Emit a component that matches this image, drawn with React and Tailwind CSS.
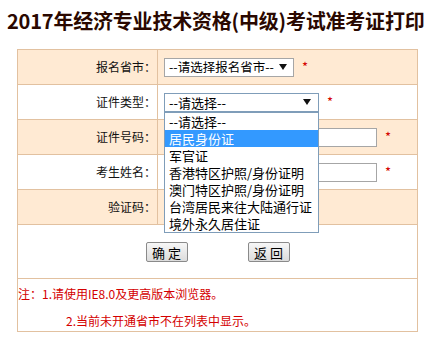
const cjk = { fontFamily: '"Noto Sans CJK SC", "Liberation Sans", sans-serif' };

const options = ['--请选择--', '居民身份证', '军官证', '香港特区护照/身份证明', '澳门特区护照/身份证明', '台湾居民来往大陆通行证', '境外永久居住证'];

const Star = () => <span className="ml-2 text-[13px] text-[#d40000]">*</span>;

const Row = ({ label, shaded, children }) => (
  <div className={`flex h-[35px] border-b border-[#e2c1a0] ${shaded ? 'bg-[#ffead3]' : 'bg-white'}`}>
    <div className="flex w-[140px] items-center justify-end border-r border-[#e2c1a0] pr-[1px] text-[12px] text-[#111]">{label}</div>
    <div className="relative flex flex-1 items-center pl-[6px]">{children}</div>
  </div>
);

const Arrow = () => (
  <svg width="8" height="6" viewBox="0 0 8 6" className="shrink-0"><path d="M0 0h8L4 6z" fill="#111" /></svg>
);

export default function App() {
  return (
    <div className="min-h-[342px] w-[431px] bg-white" style={cjk}>
      <h1 className="pl-[7px] pt-[9px] text-[20px] font-bold leading-[24px] tracking-[-0.2px] text-[#2a0800]">2017年经济专业技术资格(中级)考试准考证打印</h1>
      <div className="ml-[17px] mt-[16px] w-[401px] border-x border-t border-[#e2c1a0]">
        <Row label="报名省市：" shaded>
          <div className="flex h-[19px] w-[130px] items-center justify-between whitespace-nowrap border border-[#a6a6a6] bg-white pl-[4px] pr-[6px] text-[12.5px] leading-none">
            <span>--请选择报名省市--</span>
            <Arrow />
          </div>
          <Star />
        </Row>
        <Row label="证件类型：">
          <div className="relative">
            <div className="flex h-[19px] w-[155px] items-center justify-between border border-[#7f9db9] bg-white pl-[4px] pr-[7px] text-[13px] leading-none">
              <span>--请选择--</span>
              <Arrow />
            </div>
            <div className="absolute left-0 top-full z-10 w-[155px] border border-[#7f9db9] bg-white text-[13px]">
              {options.map((o, i) => (
                <div key={o} className={`h-[17px] overflow-hidden whitespace-nowrap pl-[4px] leading-[17px] ${i === 1 ? 'bg-[#3399ff] text-white' : 'text-black'}`}>{o}</div>
              ))}
            </div>
          </div>
          <Star />
        </Row>
        <Row label="证件号码：" shaded>
          <div className="h-[19px] w-[213px] border border-[#a6a6a6] bg-white" />
          <Star />
        </Row>
        <Row label="考生姓名：">
          <div className="h-[19px] w-[213px] border border-[#a6a6a6] bg-white" />
          <Star />
        </Row>
        <Row label="验证码：" shaded>
          <div className="h-[19px] w-[80px] border border-[#a6a6a6] bg-white" />
        </Row>
        <div className="flex h-[54px] items-center justify-center gap-[60px] border-b border-[#e2c1a0] pt-[1px]">
          <button className="h-[20px] w-[42px] rounded-[2px] border border-[#8a8a8a] bg-gradient-to-b from-[#f7f7f7] to-[#dcdcdc] text-[13px] leading-none text-black">确 定</button>
          <button className="h-[20px] w-[42px] rounded-[2px] border border-[#8a8a8a] bg-gradient-to-b from-[#f7f7f7] to-[#dcdcdc] text-[13px] leading-none text-black">返 回</button>
        </div>
        <div className="h-[53px] border-b border-[#e2c1a0] text-[12px] leading-[27px] text-[#d40000]">
          <div className="pt-[1px]">注：1.请使用IE8.0及更高版本浏览器。</div>
          <div className="pl-[48px]">2.当前未开通省市不在列表中显示。</div>
        </div>
      </div>
    </div>
  );
}
